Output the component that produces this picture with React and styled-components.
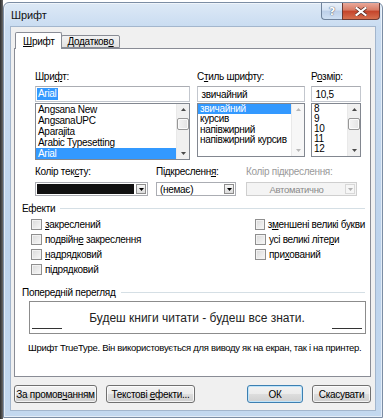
import styled, { createGlobalStyle } from 'styled-components'

const GlobalStyle = createGlobalStyle`
  html, body { margin: 0; padding: 0; }
  body {
    width: 384px;
    height: 419px;
    overflow: hidden;
    background: linear-gradient(to right, #2e2e2e 0, #6a6a6a 3px, #ffffff 3px);
    font-family: "Liberation Sans", Arial, sans-serif;
    font-size: 10px;
    letter-spacing: -0.3px;
    color: #000;
  }
`

const Window = styled.div`
  margin: 2px 0 0 3px;
  width: 380px;
  height: 416px;
  box-sizing: border-box;
  border: 1px solid #7b8da4;
  border-radius: 6px 6px 0 0;
  background: linear-gradient(to bottom, #dde9f6 0, #c9dcf1 24px, #bdd3ec 60%, #c3d8ef 100%);
  box-shadow: inset 0 0 0 1px rgba(255, 255, 255, 0.55);
  display: flex;
  flex-direction: column;
`

const TitleBar = styled.div`
  height: 24px;
  display: flex;
  align-items: flex-start;
`

const Title = styled.div`
  flex: 1;
  padding: 6px 0 0 7px;
  font-size: 11px;
  letter-spacing: -0.1px;
  color: #111;
`

const CaptionButtons = styled.div`
  display: flex;
  margin-right: 2px;
`

const HelpButton = styled.div`
  width: 21px;
  height: 17px;
  box-sizing: border-box;
  border: 1px solid #6f829b;
  border-top: none;
  border-right: none;
  border-radius: 0 0 0 4px;
  background: linear-gradient(to bottom, #e9f0f9 0, #d4e2f3 45%, #bccfe8 50%, #cfe0f3 100%);
  display: flex;
  align-items: center;
  justify-content: center;
  font-family: "DejaVu Sans", sans-serif;
  font-weight: bold;
  font-size: 11px;
  color: #ffffff;
  text-shadow: 0 0 1px #44546a, 0 0 1px #44546a;
`

const CloseButton = styled.div`
  width: 38px;
  height: 17px;
  box-sizing: border-box;
  border: 1px solid #6d3a33;
  border-top: none;
  border-radius: 0 0 4px 0;
  background: linear-gradient(to bottom, #e9a99b 0, #d77a64 45%, #c4432a 50%, #d6704f 100%);
  display: flex;
  align-items: center;
  justify-content: center;
`

const Client = styled.div`
  flex: 1;
  margin: 0 6px 6px 6px;
  border: 1px solid #a3b6cd;
  background: #f0f0f0;
  padding: 5px 4px 7px 3px;
  display: flex;
  flex-direction: column;
`

const TabRow = styled.div`
  display: flex;
  align-items: flex-end;
  padding-left: 1px;
  position: relative;
  z-index: 1;
`

const Tab = styled.div`
  box-sizing: border-box;
  height: ${p => (p.$active ? 17 : 13)}px;
  padding: 0 ${p => (p.$active ? 7 : 5)}px;
  margin-left: ${p => (p.$active ? 0 : -1)}px;
  margin-bottom: ${p => (p.$active ? -1 : 0)}px;
  border: 1px solid #898c95;
  border-bottom: ${p => (p.$active ? 'none' : '1px solid #898c95')};
  border-radius: 2px 2px 0 0;
  background: ${p => (p.$active ? '#ffffff' : 'linear-gradient(to bottom, #f3f3f3, #e2e2e2)')};
  display: flex;
  align-items: center;
  padding-top: ${p => (p.$active ? 1 : 0)}px;
`

const Panel = styled.div`
  height: 329px;
  box-sizing: border-box;
  border: 1px solid #898c95;
  background: #ffffff;
  padding: 22px 5px 0 7px;
  display: flex;
  flex-direction: column;
`

const FontRow = styled.div`
  display: flex;
  padding-left: 13px;
`

const Column = styled.div`
  width: ${p => p.$w}px;
  margin-left: ${p => p.$gap || 0}px;
  display: flex;
  flex-direction: column;
`

const Label = styled.div`
  height: 12px;
  line-height: 12px;
  white-space: nowrap;
  color: ${p => (p.$disabled ? '#9a9a9a' : '#000')};
`

const TextField = styled.div`
  margin-top: 3px;
  height: 16px;
  box-sizing: border-box;
  border: 1px solid #c3c7ce;
  border-top-color: #abadb3;
  background: #fff;
  display: flex;
  align-items: center;
  padding-left: 1px;
`

const Highlight = styled.span`
  background: #3399ff;
  color: #fff;
  padding: 0 1px;
  line-height: 12px;
`

const ListBox = styled.div`
  margin-top: 1px;
  height: ${p => p.$h}px;
  box-sizing: border-box;
  border: 1px solid #828790;
  background: #fff;
  display: flex;
`

const Items = styled.div`
  flex: 1;
  overflow: hidden;
`

const Item = styled.div`
  height: ${p => p.$rowH}px;
  line-height: ${p => p.$rowH}px;
  padding-left: 2px;
  white-space: nowrap;
  background: ${p => (p.$sel ? '#3399ff' : 'transparent')};
  color: ${p => (p.$sel ? '#fff' : '#000')};
`

const ScrollBar = styled.div`
  width: 12px;
  background: ${p => (p.$disabled ? '#f7f7f7' : '#f0f0f0')};
  border-left: 1px solid #e9e9e9;
  display: flex;
  flex-direction: column;
`

const Arrow = styled.div`
  height: 11px;
  display: flex;
  align-items: center;
  justify-content: center;
`

const Thumb = styled.div`
  margin-top: 3px;
  height: 12px;
  box-sizing: border-box;
  border: 1px solid #979797;
  border-radius: 2px;
  background: linear-gradient(to right, #f4f4f4, #e3e3e3);
  box-shadow: inset 0 0 0 1px #fbfbfb;
`

const Track = styled.div`
  flex: 1;
`

const ComboRow = styled.div`
  margin-top: 6px;
  display: flex;
  padding-left: 13px;
`

const Combo = styled.div`
  margin-top: 4px;
  height: 14px;
  box-sizing: border-box;
  border: 1px solid ${p => (p.$disabled ? '#cfcfcf' : '#abadb3')};
  background: ${p => (p.$disabled ? '#f4f4f4' : '#fff')};
  display: flex;
  align-items: stretch;
  padding: 1px;
`

const ComboValue = styled.div`
  flex: 1;
  display: flex;
  align-items: center;
  justify-content: ${p => (p.$center ? 'center' : 'flex-start')};
  padding-left: ${p => (p.$center ? 0 : 2)}px;
  color: ${p => (p.$disabled ? '#8a8a8a' : '#000')};
  font-size: ${p => (p.$center ? 9.5 : 10)}px;
`

const Swatch = styled.div`
  flex: 1;
  background: #111;
  margin-right: 2px;
`

const DropButton = styled.div`
  width: 10px;
  box-sizing: border-box;
  border: 1px solid ${p => (p.$disabled ? '#d8d8d8' : '#8d8d8d')};
  background: ${p => (p.$disabled ? '#f6f6f6' : 'linear-gradient(to bottom, #f6f6f6, #dcdcdc)')};
  display: flex;
  align-items: center;
  justify-content: center;
`

const GroupHeading = styled.div`
  margin-top: ${p => p.$top}px;
  height: 12px;
  display: flex;
  align-items: center;
  gap: 5px;
  white-space: nowrap;

  &::after {
    content: '';
    flex: 1;
    height: 1px;
    background: #d5dfe5;
    margin-top: 1px;
  }
`

const Effects = styled.div`
  margin-top: 4px;
  padding-left: 9px;
  display: flex;
`

const EffectColumn = styled.div`
  width: ${p => p.$w}px;
  display: flex;
  flex-direction: column;
  gap: 3px;
`

const CheckRow = styled.div`
  height: 12px;
  display: flex;
  align-items: center;
  gap: 3px;
  white-space: nowrap;
`

const CheckBox = styled.div`
  width: 9px;
  height: 9px;
  border: 1px solid #8f8f8f;
  background: linear-gradient(135deg, #d9d9d9, #f8f8f8);
  box-shadow: inset 0 0 0 1px #f2f2f2;
`

const Preview = styled.div`
  margin: 3px 0 0 7px;
  width: 337px;
  height: 33px;
  box-sizing: border-box;
  border: 1px solid #8c8c8c;
  display: flex;
  align-items: stretch;
  padding: 0 3px 0 2px;
`

const BaseLine = styled.div`
  width: 30px;
  height: 1px;
  background: #333;
  align-self: flex-end;
  margin-bottom: 4px;
`

const PreviewText = styled.div`
  flex: 1;
  display: flex;
  align-items: center;
  justify-content: center;
  font-size: 12px;
  letter-spacing: 0;
  color: #222;
  padding-top: 1px;
`

const Description = styled.div`
  margin: 8px 0 0 6px;
  white-space: nowrap;
  line-height: 12px;
  font-size: 9.5px;
`

const ButtonBar = styled.div`
  margin-top: 8px;
  display: flex;
  justify-content: space-between;
`

const ButtonGroup = styled.div`
  display: flex;
  gap: 9px;
`

const Button = styled.div`
  width: ${p => p.$w}px;
  height: 18px;
  box-sizing: border-box;
  border: 1px solid ${p => (p.$default ? '#3c7fb1' : '#707070')};
  border-radius: 3px;
  background: linear-gradient(to bottom, #f2f2f2 0%, #ebebeb 50%, #dddddd 51%, #cfcfcf 100%);
  box-shadow: inset 0 0 0 1px ${p => (p.$default ? '#bfe4fa' : 'rgba(255,255,255,0.75)')};
  display: flex;
  align-items: center;
  justify-content: center;
  white-space: pre;
`

const TriangleDown = ({ color = '#000' }) => (
  <svg width="5" height="3" viewBox="0 0 5 3">
    <path d="M0 0H5L2.5 3Z" fill={color} />
  </svg>
)

const TriangleUp = ({ color = '#000' }) => (
  <svg width="5" height="3" viewBox="0 0 5 3">
    <path d="M0 3H5L2.5 0Z" fill={color} />
  </svg>
)

const CloseGlyph = () => (
  <svg width="12" height="9" viewBox="0 0 12 9">
    <path d="M1.5 1 L10.5 8 M10.5 1 L1.5 8" stroke="#5a2a22" strokeWidth="3.6" strokeLinecap="square" />
    <path d="M1.5 1 L10.5 8 M10.5 1 L1.5 8" stroke="#ffffff" strokeWidth="2.2" strokeLinecap="square" />
  </svg>
)

const Scroll = ({ disabled, thumb }) => {
  const c = disabled ? '#b8b8b8' : '#4a4a4a'
  return (
    <ScrollBar $disabled={disabled}>
      <Arrow><TriangleUp color={c} /></Arrow>
      {thumb && <Thumb />}
      <Track />
      <Arrow><TriangleDown color={c} /></Arrow>
    </ScrollBar>
  )
}

const fonts = ['Angsana New', 'AngsanaUPC', 'Aparajita', 'Arabic Typesetting', 'Arial']
const styles = ['звичайний', 'курсив', 'напівжирний', 'напівжирний курсив']
const sizes = ['8', '9', '10', '11', '12']

export default function App() {
  return (
    <>
      <GlobalStyle />
      <Window>
        <TitleBar>
          <Title>Шрифт</Title>
          <CaptionButtons>
            <HelpButton>?</HelpButton>
            <CloseButton><CloseGlyph /></CloseButton>
          </CaptionButtons>
        </TitleBar>
        <Client>
          <TabRow>
            <Tab $active><u>Ш</u>рифт</Tab>
            <Tab>Додатков<u>о</u></Tab>
          </TabRow>
          <Panel>
            <FontRow>
              <Column $w={155}>
                <Label>Шри<u>ф</u>т:</Label>
                <TextField><Highlight>Arial</Highlight></TextField>
                <ListBox $h={57}>
                  <Items>
                    {fonts.map(f => (
                      <Item key={f} $rowH={11} $sel={f === 'Arial'}>{f}</Item>
                    ))}
                  </Items>
                  <Scroll thumb />
                </ListBox>
              </Column>
              <Column $w={108} $gap={7}>
                <Label>С<u>т</u>иль шрифту:</Label>
                <TextField>&nbsp;звичайний</TextField>
                <ListBox $h={54}>
                  <Items>
                    {styles.map(s => (
                      <Item key={s} $rowH={10.3} $sel={s === 'звичайний'}>{s}</Item>
                    ))}
                  </Items>
                  <Scroll disabled />
                </ListBox>
              </Column>
              <Column $w={50} $gap={6}>
                <Label>Р<u>о</u>змір:</Label>
                <TextField>&nbsp;10,5</TextField>
                <ListBox $h={54}>
                  <Items>
                    {sizes.map(s => (
                      <Item key={s} $rowH={10}>{s}</Item>
                    ))}
                  </Items>
                  <Scroll thumb />
                </ListBox>
              </Column>
            </FontRow>

            <ComboRow>
              <Column $w={113}>
                <Label>Колір тек<u>с</u>ту:</Label>
                <Combo>
                  <Swatch />
                  <DropButton><TriangleDown /></DropButton>
                </Combo>
              </Column>
              <Column $w={80} $gap={8}>
                <Label>Підкресленн<u>я</u>:</Label>
                <Combo>
                  <ComboValue>(немає)</ComboValue>
                  <DropButton><TriangleDown /></DropButton>
                </Combo>
              </Column>
              <Column $w={111} $gap={10}>
                <Label $disabled>Колір підкреслення:</Label>
                <Combo $disabled>
                  <ComboValue $center $disabled>Автоматично</ComboValue>
                  <DropButton $disabled><TriangleDown color="#b0b0b0" /></DropButton>
                </Combo>
              </Column>
            </ComboRow>

            <GroupHeading $top={6}>Ефекти</GroupHeading>
            <Effects>
              <EffectColumn $w={228}>
                <CheckRow><CheckBox /><span><u>з</u>акреслений</span></CheckRow>
                <CheckRow><CheckBox /><span>подвійн<u>е</u> закреслення</span></CheckRow>
                <CheckRow><CheckBox /><span><u>н</u>адрядковий</span></CheckRow>
                <CheckRow><CheckBox /><span>пі<u>д</u>рядковий</span></CheckRow>
              </EffectColumn>
              <EffectColumn $w={110}>
                <CheckRow><CheckBox /><span>з<u>м</u>еншені великі букви</span></CheckRow>
                <CheckRow><CheckBox /><span>усі великі{' '}літе<u>р</u>и</span></CheckRow>
                <CheckRow><CheckBox /><span>при<u>х</u>ований</span></CheckRow>
              </EffectColumn>
            </Effects>

            <GroupHeading $top={11}>Попередній перегляд</GroupHeading>
            <Preview>
              <BaseLine />
              <PreviewText>Будеш книги читати - будеш все знати.</PreviewText>
              <BaseLine />
            </Preview>
            <Description>
              Шрифт TrueType. Він використовується для виводу як на екран, так і на принтер.
            </Description>
          </Panel>

          <ButtonBar>
            <ButtonGroup>
              <Button $w={83}>За промов<u>ч</u>анням</Button>
              <Button $w={89}>Текстові{' '}<u>е</u>фекти...</Button>
            </ButtonGroup>
            <ButtonGroup>
              <Button $w={56} $default>ОК</Button>
              <Button $w={59}>Скасувати</Button>
            </ButtonGroup>
          </ButtonBar>
        </Client>
      </Window>
    </>
  )
}
